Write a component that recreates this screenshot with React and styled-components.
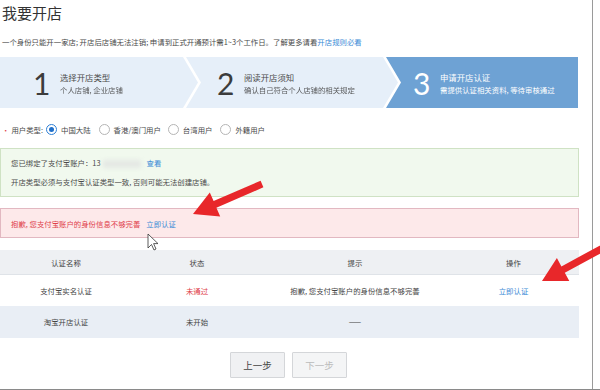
import styled, { createGlobalStyle } from 'styled-components'

const GlobalStyle = createGlobalStyle`
  html, body {
    margin: 0;
    padding: 0;
    background: #fff;
  }
  body {
    font-family: "Noto Sans CJK SC", "Noto Sans", sans-serif;
    color: #4a4a4a;
  }
`

const Page = styled.div`
  position: relative;
  width: 600px;
  height: 390px;
  box-sizing: border-box;
  border-bottom: 1px solid #8a8a8a;
  overflow: hidden;
  display: flex;
`

const Main = styled.div`
  width: 579px;
  flex: 0 0 579px;
`

const ScrollEdge = styled.div`
  margin-left: 13px;
  width: 1px;
  background: #9a9a9a;
`

const Title = styled.h1`
  margin: 3px 0 0 2px;
  font-size: 15px;
  line-height: 20px;
  font-weight: 400;
  color: #333;
`

const Intro = styled.p`
  margin: 13px 0 0 2px;
  font-size: 7.4px;
  line-height: 12px;
  color: #4a4a4a;
  white-space: nowrap;
`

const Link = styled.a`
  color: #3a8ad6;
  text-decoration: none;
  margin-left: ${p => p.$gap || 0}px;
`

const Steps = styled.div`
  margin-top: 9px;
  display: flex;
  height: 51px;
`

const clips = {
  first: 'polygon(0 0, calc(100% - 15px) 0, 100% 50%, calc(100% - 15px) 100%, 0 100%)',
  middle: 'polygon(0 0, calc(100% - 15px) 0, 100% 50%, calc(100% - 15px) 100%, 0 100%, 15px 50%)',
  last: 'polygon(0 0, 100% 0, 100% 100%, 0 100%, 15px 50%)',
}

const Step = styled.div`
  flex: 0 0 ${p => p.$width}px;
  margin-left: ${p => (p.$pos === 'first' ? 0 : -12)}px;
  clip-path: ${p => clips[p.$pos]};
  background: ${p => (p.$active ? '#6ea2d4' : '#e6eff9')};
  color: ${p => (p.$active ? '#fff' : '#4a4a4a')};
  display: flex;
  align-items: center;
  padding-left: ${p => p.$pad}px;
  box-sizing: border-box;
`

const StepNum = styled.span`
  font-family: Lato, "Liberation Sans", sans-serif;
  font-weight: 400;
  font-size: 30px;
  line-height: 30px;
  width: 17px;
  margin-right: 10px;
  margin-top: 1px;
  color: ${p => (p.$active ? '#fff' : '#3c3c3c')};
`

const StepText = styled.div`
  display: flex;
  flex-direction: column;
  gap: 1px;
`

const StepTitle = styled.span`
  font-size: 8.4px;
  line-height: 12px;
`

const StepSub = styled.span`
  font-size: 7.4px;
  line-height: 11px;
  opacity: ${p => (p.$active ? 1 : 0.9)};
`

const TypeRow = styled.div`
  margin: 13px 0 0 2px;
  height: 16px;
  display: flex;
  align-items: center;
  font-size: 7.4px;
  color: #4a4a4a;
`

const Required = styled.span`
  color: #e0404a;
  margin-right: 2px;
`

const RadioLabel = styled.label`
  display: flex;
  align-items: center;
  margin-left: ${p => p.$gap}px;
`

const RadioDot = styled.span`
  width: 9px;
  height: 9px;
  border-radius: 50%;
  border: 1px solid ${p => (p.$checked ? '#2e7fd6' : '#b5b5b5')};
  background: #fff;
  display: inline-flex;
  align-items: center;
  justify-content: center;
  margin-right: 4px;
  &::after {
    content: '';
    width: 5px;
    height: 5px;
    border-radius: 50%;
    background: ${p => (p.$checked ? '#1f6fc9' : 'transparent')};
  }
`

const Notice = styled.div`
  margin-top: 11px;
  height: 49px;
  box-sizing: border-box;
  padding: 4px 10px 0;
  background: #f1f9ee;
  border: 1px solid #cfe2c4;
  font-size: 7.4px;
  line-height: 19px;
  color: #4a4a4a;
`

const Blurred = styled.span`
  display: inline-block;
  width: 38px;
  height: 8px;
  margin-left: 2px;
  vertical-align: middle;
  background: #e4e8e4;
  filter: blur(2px);
`

const Alert = styled.div`
  margin-top: 11px;
  height: 30px;
  box-sizing: border-box;
  padding-left: 10px;
  display: flex;
  align-items: center;
  background: #fde9ea;
  border: 1px solid #e2b8c1;
  font-size: 7.4px;
  color: #e0404a;
`

const Table = styled.div`
  margin-top: 12px;
  font-size: 7.4px;
`

const Row = styled.div`
  display: grid;
  grid-template-columns: 132px 130px 186px 131px;
  height: ${p => p.$h}px;
  align-items: center;
  text-align: center;
  background: ${p => p.$bg || '#fff'};
  border-bottom: 1px solid ${p => p.$line || 'transparent'};
  box-sizing: border-box;
`

const Cell = styled.span`
  color: ${p => (p.$tone === 'red' ? '#e0404a' : p.$tone === 'blue' ? '#3a8ad6' : '#444')};
`

const Actions = styled.div`
  margin-top: 14px;
  display: flex;
  justify-content: center;
  gap: 7px;
  padding-right: 2px;
`

const Button = styled.button`
  width: 55px;
  height: 26px;
  border: 1px solid #d4d6d9;
  background: ${p => (p.disabled ? '#f4f5f6' : '#f0f1f3')};
  color: ${p => (p.disabled ? '#bbb' : '#444')};
  font-family: inherit;
  font-size: 9.5px;
  padding: 0;
  border-radius: 1px;
`

const Overlay = styled.svg`
  position: absolute;
  left: 0;
  top: 0;
  pointer-events: none;
`

const arrowPoints = (tx, ty, px, py) => {
  const dx = px - tx
  const dy = py - ty
  const len = Math.hypot(dx, dy)
  const ux = dx / len
  const uy = dy / len
  const nx = -uy
  const ny = ux
  const head = 24
  const hw = 13
  const sw = 3.6
  const bx = px - ux * head
  const by = py - uy * head
  const pts = [
    [tx + nx * sw, ty + ny * sw],
    [bx + nx * sw, by + ny * sw],
    [bx + nx * hw, by + ny * hw],
    [px, py],
    [bx - nx * hw, by - ny * hw],
    [bx - nx * sw, by - ny * sw],
    [tx - nx * sw, ty - ny * sw],
  ]
  return pts.map(p => p.map(v => v.toFixed(1)).join(',')).join(' ')
}

const steps = [
  { n: '1', title: '选择开店类型', sub: '个人店铺, 企业店铺', width: 198, pad: 33, pos: 'first' },
  { n: '2', title: '阅读开店须知', sub: '确认自己符合个人店铺的相关规定', width: 212, pad: 31, pos: 'middle' },
  { n: '3', title: '申请开店认证', sub: '需提供认证相关资料, 等待审核通过', width: 192, pad: 27, pos: 'last', active: true },
]

const userTypes = [
  { label: '中国大陆', checked: true, gap: 3 },
  { label: '香港/澳门用户', gap: 8 },
  { label: '台湾用户', gap: 7 },
  { label: '外籍用户', gap: 8 },
]

const App = () => {
  return (
    <>
      <GlobalStyle />
      <Page>
        <Main>
          <Title>我要开店</Title>
          <Intro>
            一个身份只能开一家店; 开店后店铺无法注销; 申请到正式开通预计需1~3个工作日。了解更多请看<Link href='#'>开店规则必看</Link>
          </Intro>

          <Steps>
            {steps.map(s => (
              <Step key={s.n} $width={s.width} $pad={s.pad} $pos={s.pos} $active={s.active}>
                <StepNum $active={s.active}>{s.n}</StepNum>
                <StepText>
                  <StepTitle>{s.title}</StepTitle>
                  <StepSub $active={s.active}>{s.sub}</StepSub>
                </StepText>
              </Step>
            ))}
          </Steps>

          <TypeRow>
            <Required>•</Required>用户类型:
            {userTypes.map(t => (
              <RadioLabel key={t.label} $gap={t.gap}>
                <RadioDot $checked={t.checked} />
                {t.label}
              </RadioLabel>
            ))}
          </TypeRow>

          <Notice>
            <div>
              您已绑定了支付宝账户：13<Blurred />
              <Link href='#' $gap={6}>查看</Link>
            </div>
            <div>开店类型必须与支付宝认证类型一致, 否则可能无法创建店铺。</div>
          </Notice>

          <Alert>
            抱歉, 您支付宝账户的身份信息不够完善
            <Link href='#' $gap={6}>立即认证</Link>
          </Alert>

          <Table>
            <Row $h={25} $bg='#eef0f3' $line='#dfe3e8'>
              <Cell>认证名称</Cell>
              <Cell>状态</Cell>
              <Cell>提示</Cell>
              <Cell>操作</Cell>
            </Row>
            <Row $h={31}>
              <Cell>支付宝实名认证</Cell>
              <Cell $tone='red'>未通过</Cell>
              <Cell>抱歉, 您支付宝账户的身份信息不够完善</Cell>
              <Cell $tone='blue'>立即认证</Cell>
            </Row>
            <Row $h={32} $bg='#e9eef5'>
              <Cell>淘宝开店认证</Cell>
              <Cell>未开始</Cell>
              <Cell>——</Cell>
              <Cell />
            </Row>
          </Table>

          <Actions>
            <Button>上一步</Button>
            <Button disabled>下一步</Button>
          </Actions>
        </Main>
        <ScrollEdge />

        <Overlay width='600' height='390' viewBox='0 0 600 390'>
          <polygon points={arrowPoints(262, 184, 193, 214)} fill='#e8272a' />
          <polygon points={arrowPoints(614, 242, 542, 281)} fill='#e8272a' />
          <path
            d='M148 234 L148 248 L151.5 244.5 L154 250 L156 249 L153.6 243.6 L158 243.6 Z'
            fill='#fff'
            stroke='#333'
            strokeWidth='0.8'
            strokeLinejoin='round'
          />
        </Overlay>
      </Page>
    </>
  )
}

export default App
